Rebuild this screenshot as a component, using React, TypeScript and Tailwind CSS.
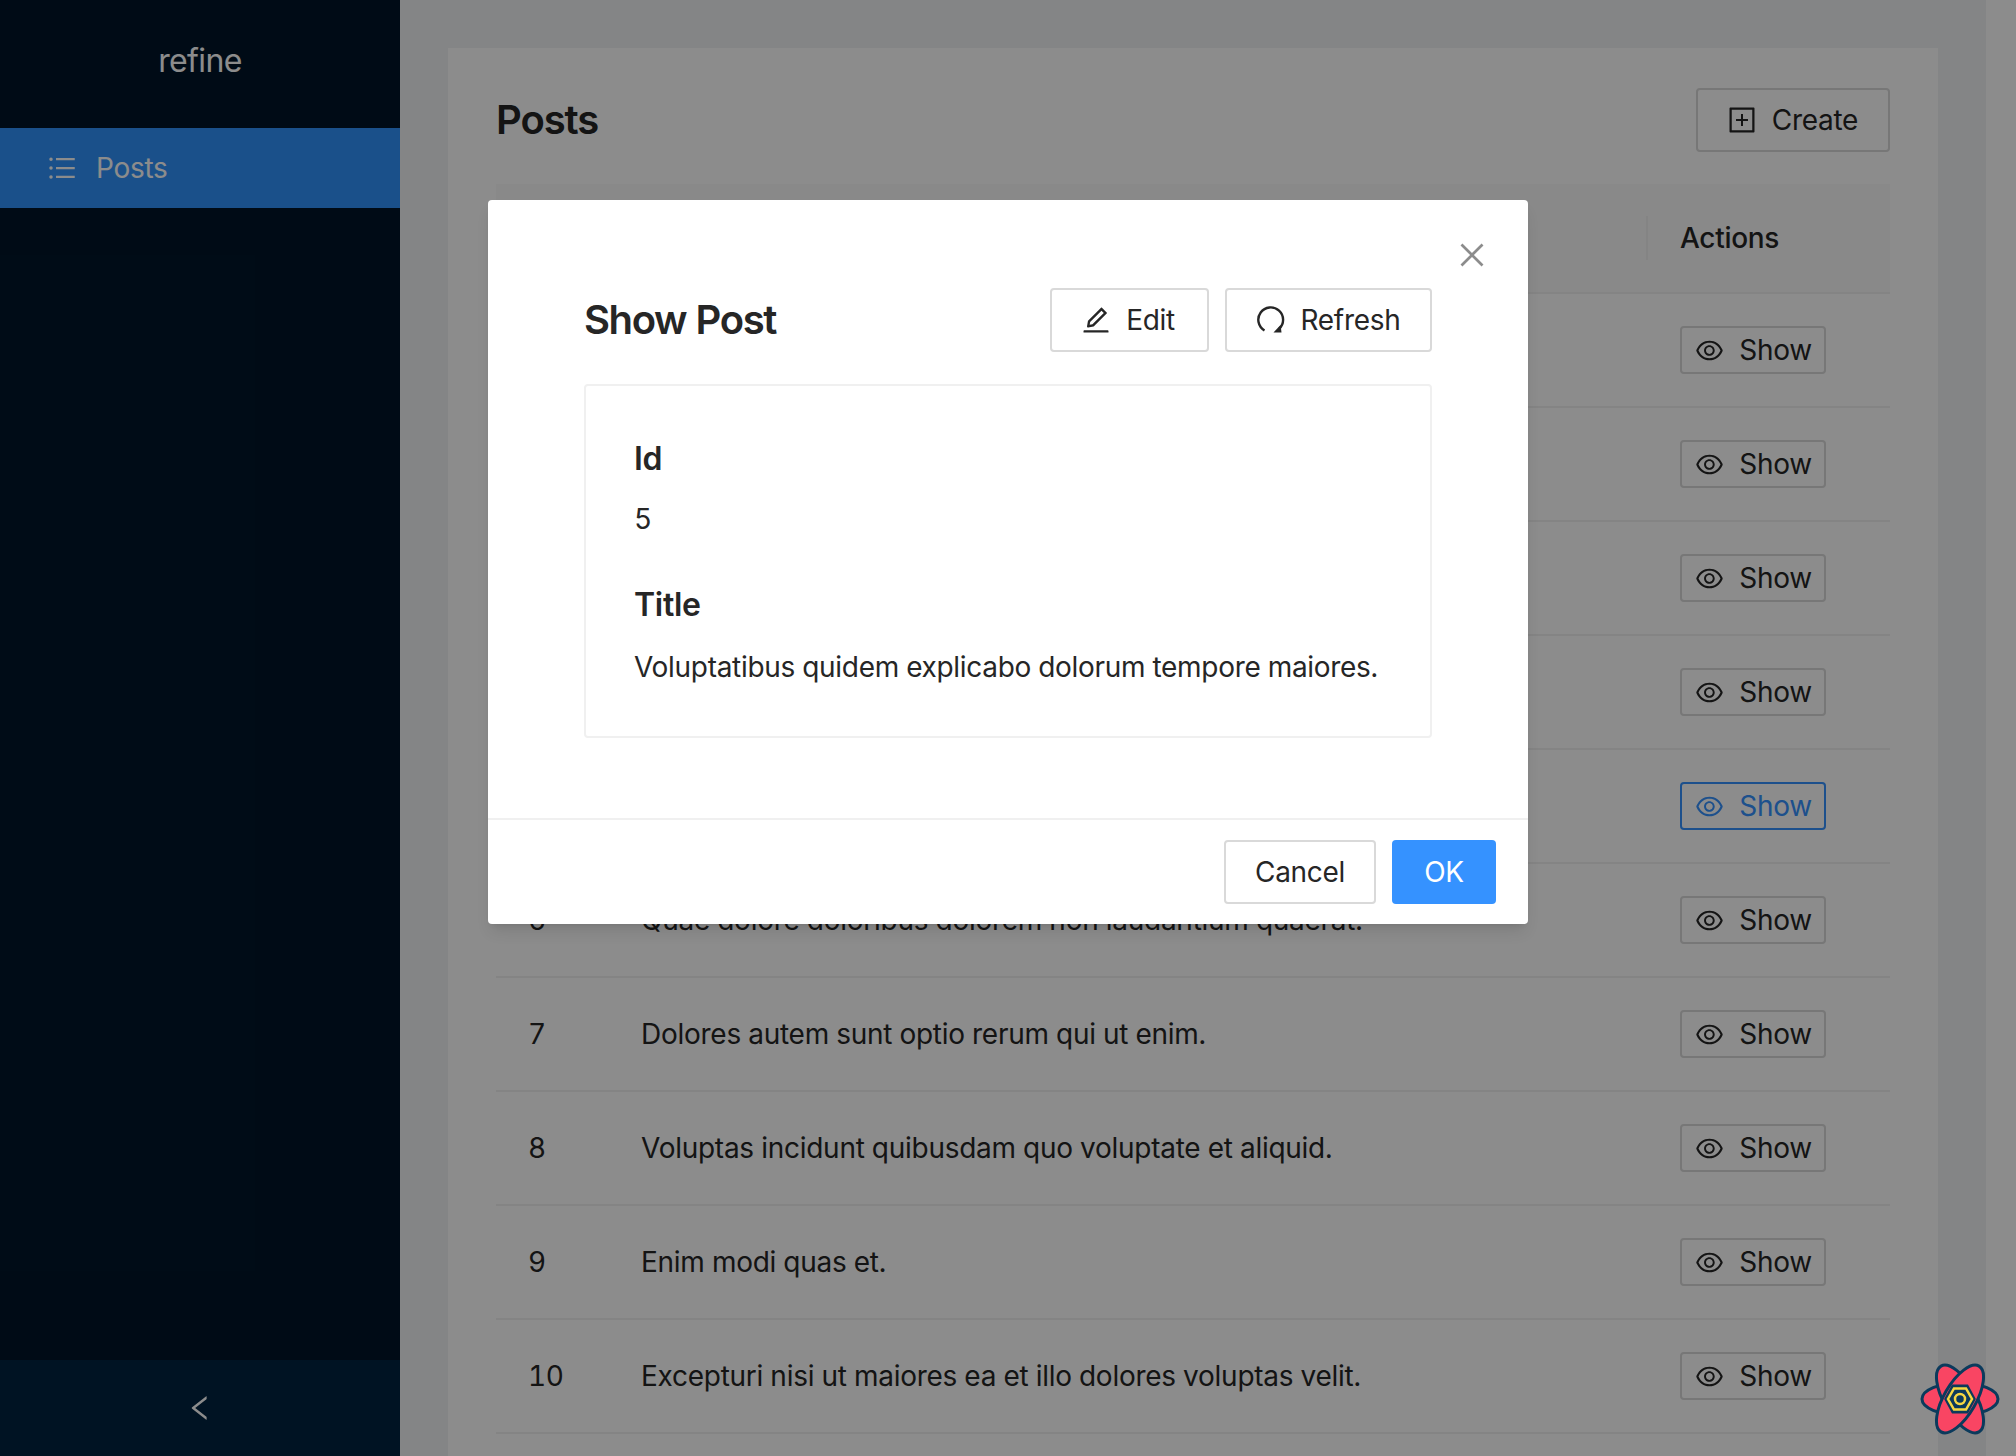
import { AiOutlineClose, AiOutlineEdit, AiOutlineEye, AiOutlineLeft, AiOutlinePlusSquare, AiOutlineUnorderedList } from "react-icons/ai";

const rows = [
  { id: 1, title: "" },
  { id: 2, title: "" },
  { id: 3, title: "" },
  { id: 4, title: "" },
  { id: 5, title: "Voluptatibus quidem explicabo dolorum tempore maiores." },
  { id: 6, title: "Quae dolore doloribus dolorem non laudantium quaerat." },
  { id: 7, title: "Dolores autem sunt optio rerum qui ut enim." },
  { id: 8, title: "Voluptas incidunt quibusdam quo voluptate et aliquid." },
  { id: 9, title: "Enim modi quas et." },
  { id: 10, title: "Excepturi nisi ut maiores ea et illo dolores voluptas velit." },
];

function RefreshIcon() {
  return (
    <svg viewBox="0 0 32 32" className="w-[32px] h-[32px]">
      <path d="M9.5 26.5 A12.4 12.4 0 1 1 24 25" fill="none" stroke="currentColor" strokeWidth="2.4" />
      <polygon points="18.5,28.5 26.5,28.5 25.5,21" fill="currentColor" />
    </svg>
  );
}

function DevtoolsLogo() {
  return (
    <svg viewBox="0 0 80 72" className="w-[80px] h-[72px]">
      <g fill="#f94563" stroke="#0b3a5c" strokeWidth="3">
        <ellipse cx="40" cy="36" rx="38" ry="16" />
        <ellipse cx="40" cy="36" rx="38" ry="16" transform="rotate(60 40 36)" />
        <ellipse cx="40" cy="36" rx="38" ry="16" transform="rotate(120 40 36)" />
      </g>
      <polygon points="27,36 33.5,24 46.5,24 53,36 46.5,48 33.5,48" fill="#0b3a5c" stroke="#0b3a5c" strokeWidth="5" />
      <polygon points="28,36 34,25.5 46,25.5 52,36 46,46.5 34,46.5" fill="#0b3a5c" stroke="#f5d742" strokeWidth="2.5" />
      <circle cx="40" cy="36" r="5" fill="#0b3a5c" stroke="#f5d742" strokeWidth="2.5" />
    </svg>
  );
}

export default function App() {
  return (
    <div className="relative flex h-screen overflow-hidden bg-white text-[28px] tracking-[-0.3px] tabular-nums text-[#262626] font-['Inter',sans-serif]">
      {/* Sidebar */}
      <aside className="flex w-[400px] shrink-0 flex-col bg-[#001529]">
        <div className="flex h-[128px] items-center justify-center pb-[6px] text-[32px] tracking-[-0.6px] text-white">refine</div>
        <div className="flex h-[80px] items-center gap-[18px] bg-[#3193fb] pl-[46px] text-white">
          <AiOutlineUnorderedList size={32} />
          <span>Posts</span>
        </div>
        <div className="flex-1" />
        <div className="flex h-[96px] items-center justify-center bg-[#002440] text-white">
          <AiOutlineLeft size={32} />
        </div>
      </aside>

      {/* Content */}
      <main className="flex-1 bg-[#f0f2f5] p-12">
        <div className="bg-white px-12 pt-10 pb-[100px]">
          <div className="flex items-center justify-between">
            <h1 className="text-[40px] font-semibold tracking-[-1.1px]">Posts</h1>
            <button className="flex h-[64px] w-[194px] items-center justify-center gap-[14px] rounded border-2 border-[#d9d9d9] bg-white pr-[2px]">
              <AiOutlinePlusSquare size={32} />
              Create
            </button>
          </div>
          <div className="mt-8 flex h-[110px] items-center border-b-2 border-[#f0f0f0] bg-[#fafafa] font-medium">
            <span className="w-[112px] pl-8">ID</span>
            <span className="flex-1 pl-[33px]">Title</span>
            <span className="h-[44px] w-[2px] bg-[#f0f0f0]" />
            <span className="w-[242px] pl-8">Actions</span>
          </div>
          {rows.map((row) => (
            <div key={row.id} className="flex h-[114px] items-center border-b-2 border-[#f0f0f0]">
              <span className="w-[112px] pl-8">{row.id}</span>
              <span className="flex-1 pl-[33px] tracking-[-0.26px]">{row.title}</span>
              <div className="w-[210px]">
                <button
                  className={
                    row.id === 5
                      ? "flex h-[48px] w-[146px] items-center justify-center gap-[14px] rounded border-2 border-[#3592ff] text-[#3592ff]"
                      : "flex h-[48px] w-[146px] items-center justify-center gap-[14px] rounded border-2 border-[#d9d9d9]"
                  }
                >
                  <AiOutlineEye size={31} />
                  Show
                </button>
              </div>
            </div>
          ))}
        </div>
      </main>
      <div className="w-[30px] shrink-0 bg-white" />

      {/* Modal mask */}
      <div className="absolute inset-0 bg-black/45" />

      <div className="absolute left-[488px] top-[200px] w-[1040px] rounded bg-white shadow-lg">
        <button className="absolute right-[39px] top-[38px] text-[#8c8c8c]">
          <AiOutlineClose size={34} />
        </button>
        <div className="px-24 pt-[88px] pb-20">
          <div className="flex items-center justify-between">
            <h2 className="text-[40px] font-semibold tracking-[-1.4px]">Show Post</h2>
            <div className="flex gap-4">
              <button className="flex h-[64px] w-[159px] items-center justify-center gap-[14px] rounded border-2 border-[#d9d9d9] bg-white pr-1">
                <AiOutlineEdit size={32} />
                Edit
              </button>
              <button className="flex h-[64px] w-[207px] items-center justify-center gap-[14px] rounded border-2 border-[#d9d9d9] bg-white pr-[2px]">
                <RefreshIcon />
                Refresh
              </button>
            </div>
          </div>
          <div className="mt-8 h-[354px] rounded border-2 border-[#f0f0f0] px-12 pt-[51px]">
            <div className="text-[32px] font-semibold leading-[44px]">Id</div>
            <div className="mt-4 leading-[44px]">5</div>
            <div className="mt-[42px] text-[32px] font-semibold leading-[44px]">Title</div>
            <div className="mt-[18px] leading-[44px]">Voluptatibus quidem explicabo dolorum tempore maiores.</div>
          </div>
        </div>
        <div className="flex justify-end gap-4 border-t-2 border-[#f0f0f0] px-8 py-5">
          <button className="h-[64px] w-[152px] rounded border-2 border-[#d9d9d9] bg-white">Cancel</button>
          <button className="h-[64px] w-[104px] rounded bg-[#3592ff] text-white">OK</button>
        </div>
      </div>

      <div className="absolute left-[1920px] top-[1363px]">
        <DevtoolsLogo />
      </div>
    </div>
  );
}
